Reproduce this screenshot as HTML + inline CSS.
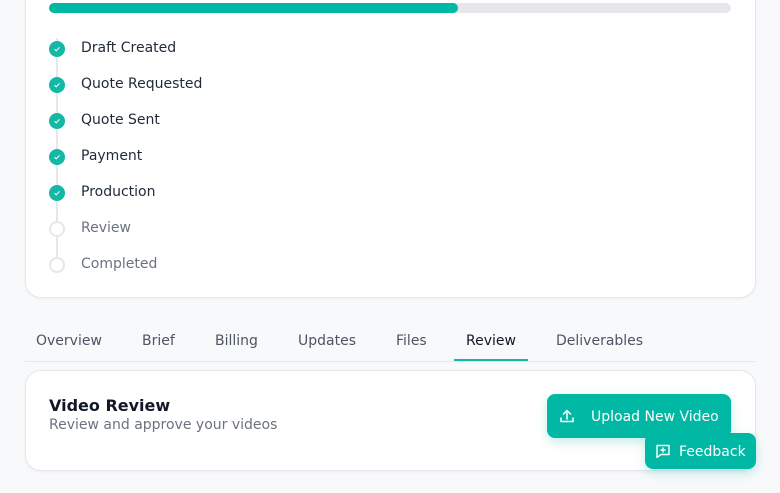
<!DOCTYPE html>
<html><head><meta charset="utf-8"><style>
*{box-sizing:border-box;margin:0;padding:0}
body{width:780px;height:493px;background:#f8f9fb;font-family:"DejaVu Sans","Liberation Sans",sans-serif;position:relative;overflow:hidden}
.card{position:absolute;left:25px;width:731px;background:#fff;border:1px solid #e5e7eb;border-radius:16px;box-shadow:0 1px 3px rgba(0,0,0,.05)}
.bar{position:absolute;left:49px;top:3px;width:682px;height:10px;border-radius:5px;background:#e5e7eb}
.bar div{width:409px;height:10px;border-radius:5px;background:#00b8a3}
.vline{position:absolute;left:56px;top:38px;width:2px;height:224px;background:#e5e7eb}
.step{position:absolute;left:49px;height:16px;display:flex;align-items:center}
.dot{width:16px;height:16px;border-radius:50%;background:#14b8a6;display:flex;align-items:center;justify-content:center;position:relative}
.dot.off{background:#fff;border:2px solid #e5e7eb}
.step span{position:absolute;left:32px;font-size:14px;color:#1f2937;white-space:nowrap;top:-1px}
.step.off span{color:#6b7280}
.tabs{position:absolute;left:25px;top:320px;width:731px;height:42px;border-bottom:1px solid #e5e7eb}
.tab{position:absolute;top:13px;font-size:14px;color:#4b5563}
.tab.act{color:#111827}
.ul{position:absolute;left:429px;top:39px;width:74px;height:2px;background:#14b8a6}
.btn{position:absolute;background:#00b8a3;color:#fff;border-radius:8px;font-size:14px;display:flex;align-items:center;box-shadow:0 4px 10px rgba(20,184,166,.25)}
</style></head><body>
<div class="card" style="top:-20px;height:318px"></div>
<div class="bar"><div></div></div>
<div class="vline"></div>
<div class="step" style="top:41px"><div class="dot"><svg width="8" height="8" viewBox="0 0 8 8"><path d="M1.5 4.2l1.7 1.6 3.3-3.5" stroke="#fff" stroke-width="1" fill="none"/></svg></div><span>Draft Created</span></div>
<div class="step" style="top:77px"><div class="dot"><svg width="8" height="8" viewBox="0 0 8 8"><path d="M1.5 4.2l1.7 1.6 3.3-3.5" stroke="#fff" stroke-width="1" fill="none"/></svg></div><span>Quote Requested</span></div>
<div class="step" style="top:113px"><div class="dot"><svg width="8" height="8" viewBox="0 0 8 8"><path d="M1.5 4.2l1.7 1.6 3.3-3.5" stroke="#fff" stroke-width="1" fill="none"/></svg></div><span>Quote Sent</span></div>
<div class="step" style="top:149px"><div class="dot"><svg width="8" height="8" viewBox="0 0 8 8"><path d="M1.5 4.2l1.7 1.6 3.3-3.5" stroke="#fff" stroke-width="1" fill="none"/></svg></div><span>Payment</span></div>
<div class="step" style="top:185px"><div class="dot"><svg width="8" height="8" viewBox="0 0 8 8"><path d="M1.5 4.2l1.7 1.6 3.3-3.5" stroke="#fff" stroke-width="1" fill="none"/></svg></div><span>Production</span></div>
<div class="step off" style="top:221px"><div class="dot off"></div><span>Review</span></div>
<div class="step off" style="top:257px"><div class="dot off"></div><span>Completed</span></div>

<div class="tabs">
<div class="tab" style="left:11px">Overview</div>
<div class="tab" style="left:117px">Brief</div>
<div class="tab" style="left:190px">Billing</div>
<div class="tab" style="left:273px">Updates</div>
<div class="tab" style="left:371px">Files</div>
<div class="tab act" style="left:441px">Review</div>
<div class="tab" style="left:531px">Deliverables</div>
<div class="ul"></div>
</div>

<div class="card" style="top:370px;height:101px"></div>
<div style="position:absolute;left:49px;top:396px;font-size:16px;font-weight:bold;color:#111827">Video Review</div>
<div style="position:absolute;left:49px;top:417px;font-size:14px;color:#6b7280">Review and approve your videos</div>
<div class="btn" style="left:547px;top:394px;width:184px;height:44px">
<svg style="position:absolute;left:12px;top:14px" width="16" height="16" viewBox="0 0 16 16" fill="none" stroke="#fff" stroke-width="1.5" stroke-linecap="round" stroke-linejoin="round"><path d="M2 10v3.5h12V10M8 11V2.5M4.5 6L8 2.5 11.5 6"/></svg>
<span style="position:absolute;left:44px;top:15px">Upload New Video</span></div>
<div class="btn" style="left:645px;top:433px;width:111px;height:36px">
<svg style="position:absolute;left:10px;top:10px" width="16" height="16" viewBox="0 0 16 16" fill="none" stroke="#fff" stroke-width="1.4" stroke-linejoin="round"><path d="M2 2.5h12v9H6l-4 3z"/><path d="M8 4.5v5M5.5 7h5"/></svg>
<span style="position:absolute;left:34px;top:11px">Feedback</span></div>
</body></html>
